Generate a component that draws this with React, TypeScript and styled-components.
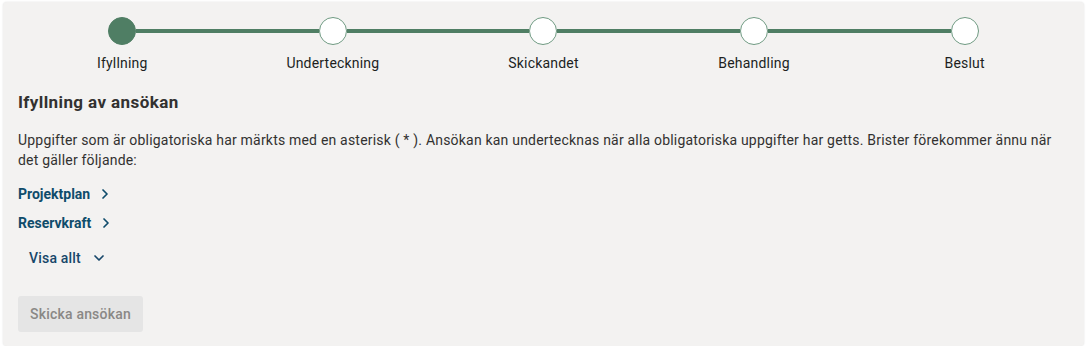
import React from 'react';
import styled, { createGlobalStyle } from 'styled-components';
import { ChevronRight, ChevronDown } from 'lucide-react';

const GlobalStyle = createGlobalStyle`
    html, body {
        margin: 0;
        padding: 0;
        background: #ffffff;
        font-family: Roboto, "Liberation Sans", Arial, sans-serif;
    }
`;

const steps = ['Ifyllning', 'Underteckning', 'Skickandet', 'Behandling', 'Beslut'];
const current = 0;
const missing = ['Projektplan', 'Reservkraft'];

export default function App(): JSX.Element {
    return (
        <Page>
            <GlobalStyle />
            <Card>
                <Stepper>
                    {steps.map((label, i) => (
                        <Step key={label}>
                            <Track>
                                <Connector $hidden={i === 0} />
                                <Dot $active={i === current} />
                                <Connector $hidden={i === steps.length - 1} />
                            </Track>
                            <StepLabel>{label}</StepLabel>
                        </Step>
                    ))}
                </Stepper>

                <Heading>Ifyllning av ansökan</Heading>
                <Text>
                    Uppgifter som är obligatoriska har märkts med en asterisk ( * ). Ansökan kan undertecknas när alla obligatoriska uppgifter har getts. Brister förekommer ännu när det gäller följande:
                </Text>

                <LinkList>
                    {missing.map((item) => (
                        <MissingLink key={item} href="#">
                            {item}
                            <ChevronRight size={16} strokeWidth={2.6} />
                        </MissingLink>
                    ))}
                </LinkList>

                <ShowAll type="button">
                    Visa allt
                    <ChevronDown size={16} strokeWidth={2.6} />
                </ShowAll>

                <SubmitButton type="button" disabled>Skicka ansökan</SubmitButton>
            </Card>
        </Page>
    );
}

const Page = styled.div`
    padding: 2px 5px 0 3px;
`;

const Card = styled.div`
    display: flex;
    flex-direction: column;
    align-items: flex-start;
    background: #f3f2f1;
    border-radius: 4px;
    box-shadow: 0 0 2px rgba(0, 0, 0, 0.12);
    padding: 15px 14px 14px;
    min-height: 315px;
`;

const Stepper = styled.div`
    display: flex;
    align-self: stretch;
`;

const Step = styled.div`
    flex: 1;
    display: flex;
    flex-direction: column;
    align-items: center;
`;

const Track = styled.div`
    display: flex;
    align-items: center;
    align-self: stretch;
`;

const Connector = styled.div<{ $hidden: boolean }>`
    flex: 1;
    height: 4px;
    background: ${(p) => (p.$hidden ? 'transparent' : '#4f7e64')};
`;

const Dot = styled.div<{ $active: boolean }>`
    width: 28px;
    height: 28px;
    box-sizing: border-box;
    border-radius: 50%;
    border: 1px solid ${(p) => (p.$active ? '#4f7e64' : '#6f9a82')};
    background: ${(p) => (p.$active ? '#4f7e64' : '#ffffff')};
`;

const StepLabel = styled.span`
    margin-top: 8px;
    font-size: 14px;
    line-height: 20px;
    letter-spacing: 0.2px;
    color: #201f1e;
`;

const Heading = styled.h2`
    margin: 17px 0 0 1px;
    font-size: 17px;
    line-height: 24px;
    font-weight: 700;
    letter-spacing: 0.4px;
    color: #323130;
`;

const Text = styled.p`
    margin: 16px 0 0 1px;
    font-size: 14px;
    line-height: 20px;
    letter-spacing: 0.2px;
    color: #323130;
`;

const LinkList = styled.div`
    display: flex;
    flex-direction: column;
    gap: 9px;
    margin-top: 14px;
`;

const MissingLink = styled.a`
    display: inline-flex;
    align-items: center;
    gap: 7px;
    margin-left: 1px;
    font-size: 14px;
    line-height: 20px;
    font-weight: 700;
    color: #0f4c6b;
    text-decoration: none;
`;

const ShowAll = styled.button`
    display: inline-flex;
    align-items: center;
    gap: 10px;
    margin-top: 9px;
    height: 32px;
    padding: 0 11px 0 12px;
    border: none;
    background: transparent;
    font-family: inherit;
    font-size: 14px;
    font-weight: 500;
    letter-spacing: 0.2px;
    color: #17476a;
    cursor: pointer;
`;

const SubmitButton = styled.button`
    margin-top: 22px;
    margin-left: 1px;
    height: 36px;
    padding: 0 12px;
    border: none;
    border-radius: 3px;
    background: #e5e5e5;
    font-family: inherit;
    font-size: 14px;
    font-weight: 500;
    letter-spacing: 0.2px;
    color: #8a8886;
`;
